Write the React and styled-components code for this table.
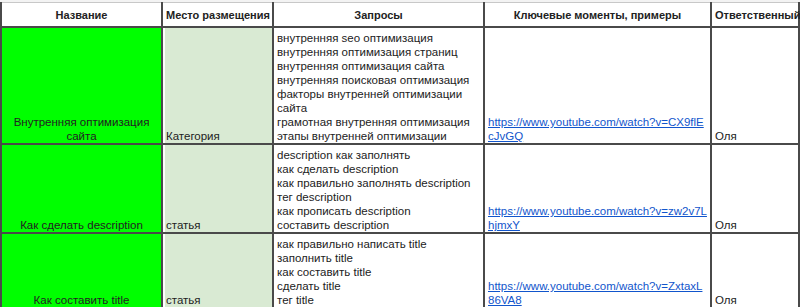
import React from "react";
import styled, { createGlobalStyle } from "styled-components";

const GlobalStyle = createGlobalStyle`
  html, body {
    margin: 0;
    padding: 0;
    background: #f3f3f3;
  }
  body, table, th, td {
    font-family: "Liberation Sans", Arial, sans-serif;
  }
`;

const Page = styled.div`
  width: 800px;
  height: 307px;
  overflow: hidden;
  padding-top: 2px;
  box-sizing: border-box;
`;

const Sheet = styled.table`
  width: 798px;
  table-layout: fixed;
  border-collapse: collapse;
  background: #fff;
  border-top: 1px solid #c8c8c8;
`;

const HeadCell = styled.th`
  height: 22px;
  padding: 1px 3px 0 3px;
  font-family: "Liberation Sans", Arial, sans-serif;
  font-size: 11px;
  font-weight: bold;
  color: #222;
  text-align: center;
  vertical-align: middle;
  white-space: nowrap;
  border-left: 2px solid #4a4a4a;
  border-right: 2px solid #4a4a4a;
  border-bottom: 2px solid #4a4a4a;
  background: #fff;
`;

const Cell = styled.td`
  padding: 3px 3px 0 3px;
  font-family: "Liberation Sans", Arial, sans-serif;
  font-size: 11.5px;
  line-height: 14px;
  color: #222;
  vertical-align: bottom;
  text-align: ${(p) => (p.$center ? "center" : "left")};
  background: ${(p) => p.$bg || "#fff"};
  box-shadow: ${(p) => (p.$gap ? "inset 2px 0 0 #fff" : "none")};
  border: 2px solid #4a4a4a;
  word-break: ${(p) => (p.$breakAll ? "break-all" : "normal")};
`;

const Query = styled.div`
  white-space: normal;
`;

const VideoLink = styled.a`
  color: #1155cc;
  text-decoration: underline;
`;

const rows = [
  {
    title: "Внутренняя оптимизация сайта",
    place: "Категория",
    queries: [
      "внутренняя seo оптимизация",
      "внутренняя оптимизация страниц",
      "внутренняя оптимизация сайта",
      "внутренняя поисковая оптимизация",
      "факторы внутренней оптимизации сайта",
      "грамотная внутренняя оптимизация",
      "этапы внутренней оптимизации",
    ],
    link: "https://www.youtube.com/watch?v=CX9flEcJvGQ",
    owner: "Оля",
  },
  {
    title: "Как сделать description",
    place: "статья",
    queries: [
      "description как заполнять",
      "как сделать description",
      "как правильно заполнять description",
      "тег description",
      "как прописать description",
      "составить description",
    ],
    link: "https://www.youtube.com/watch?v=zw2v7LhjmxY",
    owner: "Оля",
  },
  {
    title: "Как составить title",
    place: "статья",
    queries: [
      "как правильно написать title",
      "заполнить title",
      "как составить title",
      "сделать title",
      "тег title",
    ],
    link: "https://www.youtube.com/watch?v=ZxtaxL86VA8",
    owner: "Оля",
  },
];

export default function App() {
  return (
    <Page>
      <GlobalStyle />
      <Sheet>
        <colgroup>
          <col style={{ width: 161 }} />
          <col style={{ width: 111 }} />
          <col style={{ width: 211 }} />
          <col style={{ width: 227 }} />
          <col style={{ width: 88 }} />
        </colgroup>
        <thead>
          <tr>
            <HeadCell>Название</HeadCell>
            <HeadCell>Место размещения</HeadCell>
            <HeadCell>Запросы</HeadCell>
            <HeadCell>Ключевые моменты, примеры</HeadCell>
            <HeadCell>Ответственный</HeadCell>
          </tr>
        </thead>
        <tbody>
          {rows.map((r) => (
            <tr key={r.title}>
              <Cell $center $bg="#00ff00">
                {r.title}
              </Cell>
              <Cell $bg="#d9ead3" $gap>
                {r.place}
              </Cell>
              <Cell>
                {r.queries.map((q) => (
                  <Query key={q}>{q}</Query>
                ))}
              </Cell>
              <Cell $breakAll>
                <VideoLink href={r.link}>{r.link}</VideoLink>
              </Cell>
              <Cell>{r.owner}</Cell>
            </tr>
          ))}
        </tbody>
      </Sheet>
    </Page>
  );
}
